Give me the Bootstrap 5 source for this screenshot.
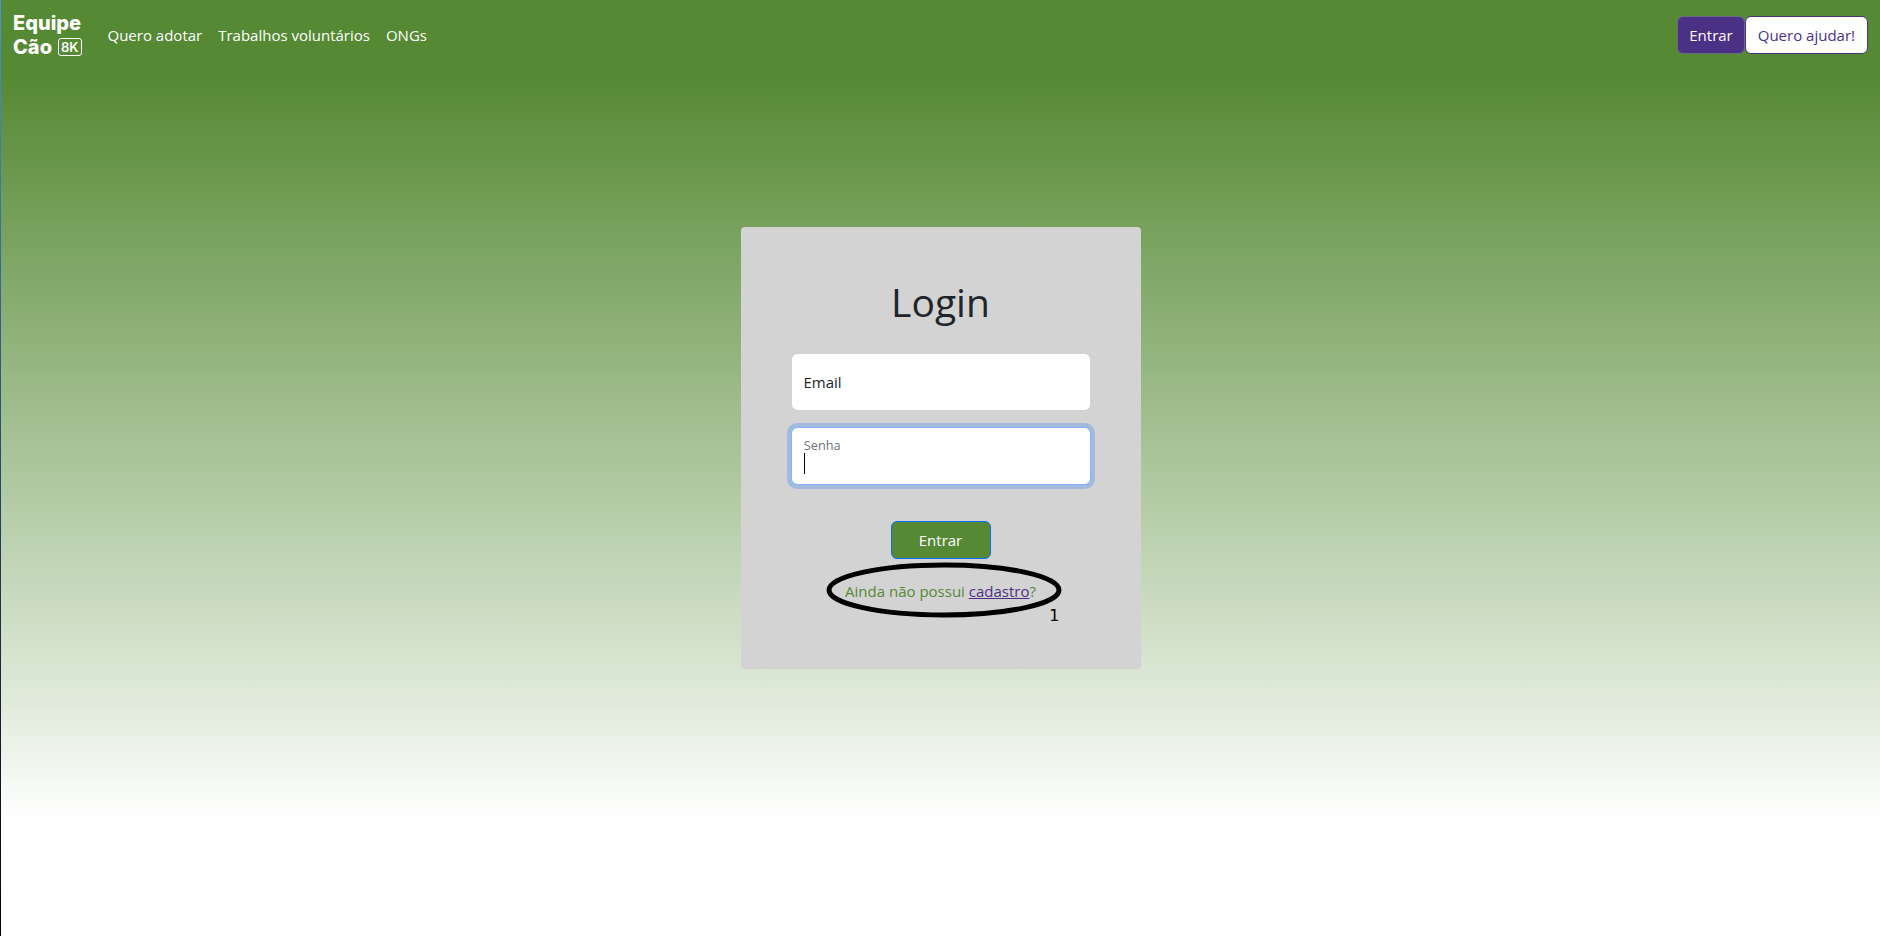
<!DOCTYPE html>
<html lang="pt-BR">
<head>
<meta charset="utf-8">
<meta name="viewport" content="width=device-width, initial-scale=1">
<title>Equipe Cão 8K - Login</title>
<link href="https://cdn.jsdelivr.net/npm/bootstrap@5.3.0/dist/css/bootstrap.min.css" rel="stylesheet">
<style>
  :root { --leaf: #558933; --grape: #4b3186; }
  body {
    font-family: "Open Sans", "Noto Sans", sans-serif;
    font-size: 15px;
    background: linear-gradient(to bottom, var(--leaf) 75px, #e1ebdc 705px, #fff 820px);
    border-left: 1px solid;
    border-image: linear-gradient(#4e93d9, #000) 1;
  }
  .site-nav { background: var(--leaf); min-height: 70px; --bs-navbar-padding-y: 0; }
  .site-nav .nav-link { color: #fff; font-size: 15px; }
  .brand { font-family: Inter, sans-serif; font-weight: 800; font-size: 20px; line-height: 24px; color: #fff; margin-right: 18px; }
  .brand-tag { border: 1px solid #fff; border-radius: 3px; font-size: 13px; font-weight: 600; line-height: 16px; padding: 0 2px; margin-left: 6px; }
  .btn { font-size: 15px; line-height: 24px; --bs-btn-padding-x: 11px; }
  .btn-grape { --bs-btn-color: #fff; --bs-btn-bg: var(--grape); --bs-btn-border-color: #6c6a86; --bs-btn-hover-color: #fff; --bs-btn-hover-bg: #3c276b; }
  .btn-help { --bs-btn-padding-x: 12px; --bs-btn-color: var(--grape); --bs-btn-bg: #fff; --bs-btn-border-color: var(--grape); --bs-btn-hover-color: #fff; --bs-btn-hover-bg: var(--grape); }
  .btn-leaf { --bs-btn-color: #fff; --bs-btn-bg: var(--leaf); --bs-btn-border-color: #0d6efd; --bs-btn-hover-color: #fff; --bs-btn-hover-bg: #447028; width: 100px; margin-top: 36px; }
  .login-area { padding-bottom: 110px; }
  .login-panel { width: 400px; max-width: 100%; padding: 50px; background: #d3d3d3; border-radius: 4px; }
  .login-panel h1 { font-size: 39px; font-weight: 400; line-height: 50px; margin-bottom: 26px; }
  .login-panel .form-control { height: 58px; min-height: 58px; font-size: 15px; border-color: #ced4da; }
  .login-panel .form-floating > label { color: #212529; line-height: 24px; }
  .login-panel .field-active > .form-control { border-color: #86b7fe; box-shadow: 0 0 0 4px rgba(13, 110, 253, .25); }
  .login-panel .field-active > label { color: #212529; opacity: .65; transform: scale(.85) translateY(-8px) translateX(2px); }
  .caret { position: absolute; left: 13px; top: 26px; width: 1px; height: 21px; background: #000; }
  .signup { color: var(--leaf); line-height: 24px; margin: 20px 0 16px; }
  .signup a { color: var(--grape); }
  .signup-ring { position: absolute; left: 35px; top: -17px; width: 236px; height: 56px; pointer-events: none; }
  .ring-number { position: absolute; right: 31px; top: 25px; color: #000; font-family: "DejaVu Sans", sans-serif; font-size: 16px; }
</style>
</head>
<body class="min-vh-100 d-flex flex-column">
<nav class="navbar navbar-expand site-nav align-items-center">
  <div class="container-fluid">
    <a class="navbar-brand brand p-0" href="#">Equipe<br><span class="d-flex align-items-center">Cão <span class="brand-tag">8K</span></span></a>
    <div class="navbar-nav me-auto">
      <a class="nav-link" href="#">Quero adotar</a>
      <a class="nav-link" href="#">Trabalhos voluntários</a>
      <a class="nav-link" href="#">ONGs</a>
    </div>
    <div class="d-flex">
      <button class="btn btn-grape" type="button">Entrar</button>
      <button class="btn btn-help" type="button">Quero ajudar!</button>
    </div>
  </div>
</nav>
<main class="login-area flex-grow-1 d-flex flex-column align-items-center justify-content-center">
  <form class="login-panel text-center">
    <h1>Login</h1>
    <div class="form-floating text-start mb-3">
      <input class="form-control" id="email" type="email" placeholder="Email">
      <label for="email">Email</label>
    </div>
    <div class="form-floating field-active text-start">
      <input class="form-control" id="senha" type="password" placeholder="Senha">
      <label for="senha">Senha</label>
      <span class="caret"></span>
    </div>
    <button class="btn btn-leaf" type="submit">Entrar</button>
    <div class="signup position-relative">
      Ainda não possui <a href="#">cadastro</a>?
      <svg class="signup-ring" viewBox="0 0 236 56" aria-hidden="true"><ellipse cx="118" cy="28" rx="115" ry="25" fill="none" stroke="#000" stroke-width="5"/></svg>
      <span class="ring-number">1</span>
    </div>
  </form>
</main>
<script src="https://cdn.jsdelivr.net/npm/bootstrap@5.3.0/dist/js/bootstrap.bundle.min.js"></script>
</body>
</html>
